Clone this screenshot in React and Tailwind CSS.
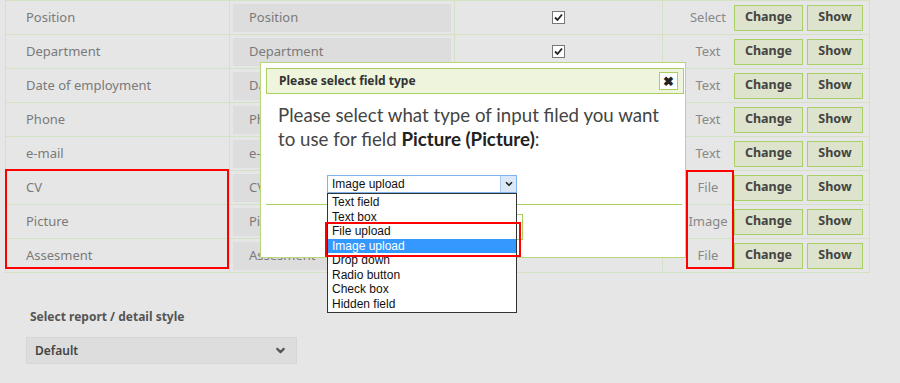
import { ChevronDown } from 'lucide-react'

const rows = [
  { name: 'Position', type: 'Select', checked: true },
  { name: 'Department', type: 'Text', checked: true },
  { name: 'Date of employment', type: 'Text' },
  { name: 'Phone', type: 'Text' },
  { name: 'e-mail', type: 'Text' },
  { name: 'CV', type: 'File' },
  { name: 'Picture', type: 'Image' },
  { name: 'Assesment', type: 'File' },
]

const options = ['Text field', 'Text box', 'File upload', 'Image upload', 'Drop down', 'Radio button', 'Check box', 'Hidden field']

function Check() {
  return (
    <span className="w-[13px] h-[13px] border border-[#777] bg-white flex items-center justify-center">
      <svg width="9" height="9" viewBox="0 0 9 9">
        <path d="M1 4.5 L3.5 7 L8 1.5" stroke="#222" strokeWidth="1.8" fill="none" />
      </svg>
    </span>
  )
}

function Row({ row }) {
  return (
    <div className="grid grid-cols-[224px_225px_208px_207px] h-[34px] border-b border-[#d3e2c2]">
      <div className="flex items-center pl-5 text-[13px] text-[#7a7a7a] border-r border-[#d3e2c2]">{row.name}</div>
      <div className="flex items-center px-[3px] border-r border-[#d3e2c2]">
        <div className="w-full h-[28px] bg-[#dddddd] flex items-center pl-4 text-[13px] text-[#7a7a7a]">{row.name}</div>
      </div>
      <div className="flex items-center justify-center border-r border-[#d3e2c2]">
        {row.checked && <Check />}
      </div>
      <div className="flex items-center">
        <span className="ml-[22px] w-[46px] text-center text-[13px] text-[#888]">{row.type}</span>
        <button className="ml-[3px] w-[69px] h-[26px] bg-[#dde3cc] border border-[#a9d062] text-[12.5px] font-bold text-[#444]">Change</button>
        <button className="ml-[4px] w-[56px] h-[26px] bg-[#dde3cc] border border-[#a9d062] text-[12.5px] font-bold text-[#444]">Show</button>
      </div>
    </div>
  )
}

export default function App() {
  return (
    <div className="relative w-[900px] h-[383px] bg-[#e6e6e6] overflow-hidden" style={{ fontFamily: '"Noto Sans", sans-serif' }}>
      <div className="ml-[5px] w-[865px] border-t border-l border-r border-[#d3e2c2]">
        {rows.map(r => <Row key={r.name} row={r} />)}
      </div>

      <div className="pl-[30px] pt-[35px]">
        <div className="text-[12px] font-bold text-[#555]">Select report / detail style</div>
        <div className="mt-[11px] -ml-[4px] w-[271px] h-[27px] bg-[#dddddd] border border-[#d6d6d6] flex items-center justify-between pl-[8px] pr-[9px]">
          <span className="text-[12px] font-semibold text-[#444]">Default</span>
          <ChevronDown size={13} strokeWidth={4} color="#555" />
        </div>
      </div>

      {/* modal */}
      <div className="absolute left-[260px] top-[62px] w-[426px] h-[196px] bg-white border border-[#b6d77c]">
        <div className="absolute left-[5px] top-[5px] w-[418px] h-[26px] bg-[#eef5dc] border border-[#a9d05f] flex items-center justify-between pl-[12px] pr-[5px]">
          <span className="text-[12px] font-bold text-[#333]">Please select field type</span>
          <span className="w-[19px] h-[18px] bg-white border border-[#a9d05f] flex items-center justify-center text-[13px] font-bold text-[#222] leading-none">✖</span>
        </div>
        <div className="absolute left-[17px] top-[40px] w-[386px] text-[18.7px] leading-[24px] text-[#444]" style={{ fontFamily: 'Lato, sans-serif' }}>
          Please select what type of input filed you want to use for field <b className="font-bold text-[#222]">Picture (Picture)</b>:
        </div>
        <div className="absolute left-[5px] top-[141px] w-[416px] border-t border-[#a9d05f]" />
        <div className="absolute left-[175px] top-[151px] w-[87px] h-[26px] bg-white border border-[#a9d05f]" />
      </div>

      {/* select with open list */}
      <div className="absolute left-[327px] top-[175px] w-[190px]" style={{ fontFamily: '"Liberation Sans", sans-serif' }}>
        <div className="h-[18px] bg-white border border-[#7eb4ea] flex items-center">
          <span className="flex-1 pl-[4px] text-[12px] text-[#111]">Image upload</span>
          <span className="w-[16px] h-full bg-[#dbe8f7] border-l border-[#a9c8ec] flex items-center justify-center">
            <ChevronDown size={10} strokeWidth={4} color="#222" />
          </span>
        </div>
        <div className="bg-white border border-[#333] py-[1px]">
          {options.map(o => (
            <div key={o} className={`h-[14.5px] pl-[4px] text-[12px] leading-[14.5px] ${o === 'Image upload' ? 'bg-[#3399ff] text-white' : 'text-[#111]'}`}>{o}</div>
          ))}
        </div>
      </div>

      {/* annotation boxes */}
      <div className="absolute left-[5px] top-[169px] w-[224px] h-[100px] border-2 border-[#ff0000]" />
      <div className="absolute left-[686px] top-[170px] w-[48px] h-[99px] border-2 border-[#ff0000]" />
      <div className="absolute left-[325px] top-[222px] w-[196px] h-[35px] border-2 border-[#ff0000]" />
    </div>
  )
}
